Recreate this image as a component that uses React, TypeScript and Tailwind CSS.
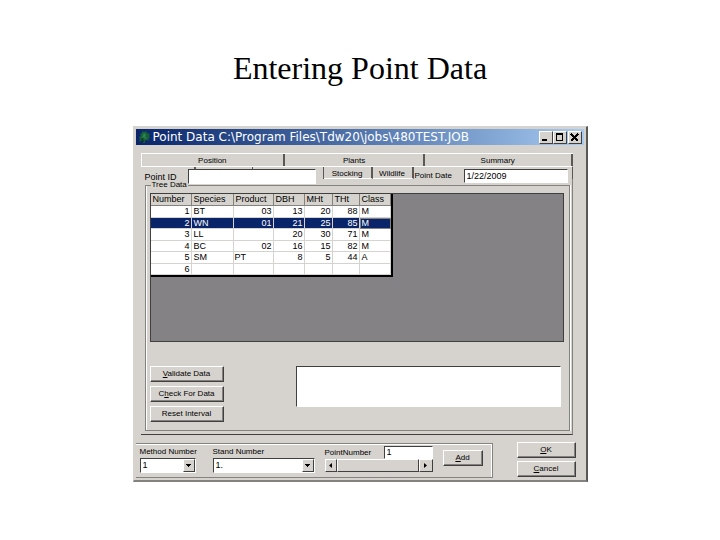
import { useState } from "react";
import type { ReactNode } from "react";

interface TreeRow {
  number: number;
  species: string;
  product: string;
  dbh: string;
  mht: string;
  tht: string;
  cls: string;
}

const TREES: TreeRow[] = [
  { number: 1, species: "BT", product: "03", dbh: "13", mht: "20", tht: "88", cls: "M" },
  { number: 2, species: "WN", product: "01", dbh: "21", mht: "25", tht: "85", cls: "M" },
  { number: 3, species: "LL", product: "", dbh: "20", mht: "30", tht: "71", cls: "M" },
  { number: 4, species: "BC", product: "02", dbh: "16", mht: "15", tht: "82", cls: "M" },
  { number: 5, species: "SM", product: "PT", dbh: "8", mht: "5", tht: "44", cls: "A" },
  { number: 6, species: "", product: "", dbh: "", mht: "", tht: "", cls: "" },
];

const HEADERS = ["Number", "Species", "Product", "DBH", "MHt", "THt", "Class"];

const RAISED =
  "border border-t-white border-l-white border-b-[#404040] border-r-[#404040] bg-[#d6d3ce]";
const SUNKEN =
  "border border-t-[#404040] border-l-[#404040] border-b-white border-r-white bg-white";

function PushButton({ children, className }: { children: ReactNode; className: string }) {
  return (
    <button
      type="button"
      className={`${RAISED} flex items-center justify-center whitespace-nowrap shadow-[inset_-1px_-1px_0_#84827f] ${className}`}
    >
      <span>{children}</span>
    </button>
  );
}

function Combo({ id, label, value, className }: { id: string; label: string; value: string; className: string }) {
  return (
    <div className={className}>
      <label htmlFor={id} className="block h-3 whitespace-nowrap">
        {label}
      </label>
      <div className={`${SUNKEN} relative h-[15px]`}>
        <select
          id={id}
          defaultValue={value}
          className="block h-[13px] w-full appearance-none bg-white pl-0.5 text-[9px] leading-[13px] outline-none"
        >
          <option>{value}</option>
        </select>
        <span
          className={`${RAISED} pointer-events-none absolute top-0 right-0 flex h-[13px] w-3 items-center justify-center`}
        >
          <svg width="5" height="3" viewBox="0 0 5 3" shapeRendering="crispEdges">
            <path d="M0 0h5v1H4v1H3v1H2V2H1V1H0z" />
          </svg>
        </span>
      </div>
    </div>
  );
}

function WindowButton({ label, children }: { label: string; children: ReactNode }) {
  return (
    <button
      type="button"
      aria-label={label}
      className={`${RAISED} flex h-[13px] w-[14px] items-center justify-center`}
    >
      <svg width="9" height="9" viewBox="0 0 9 9" shapeRendering="crispEdges">
        {children}
      </svg>
    </button>
  );
}

function TitleBar() {
  return (
    <div className="flex h-4 items-center bg-linear-to-r from-[#0a246a] to-[#a6caf0] pr-0.5">
      <svg className="ml-0.5 shrink-0" width="13" height="14" viewBox="0 0 13 14">
        <path
          d="M4 1l2 1 2-1 1 2 3 1-1 2 1 2-2 1 1 2-3-1-1 1v2H5v-3L3 11l-2 1 1-3-1-2 2-1-1-2 2-1z"
          fill="#17603a"
        />
        <path d="M6 3l2 2-1 2 2 1-2 1-1-2-2 1 1-3z" fill="#2c8550" />
        <path d="M3 9l2-1 1 4H4z" fill="#0c3a2c" />
      </svg>
      <h2 className="ml-0.5 flex-1 whitespace-nowrap font-['DejaVu_Sans',sans-serif] text-[12px] leading-4 text-white">
        Point Data C:\Program Files\Tdw20\jobs\480TEST.JOB
      </h2>
      <div className="flex">
        <WindowButton label="Minimize">
          <path d="M1 6h5v2H1z" />
        </WindowButton>
        <WindowButton label="Maximize">
          <path d="M1 0h7v8H1zM2 2v5h5V2z" fillRule="evenodd" />
        </WindowButton>
        <span className="w-px" />
        <WindowButton label="Close">
          <path d="M1 1l7 7M8 1L1 8" stroke="#000" strokeWidth="2" />
        </WindowButton>
      </div>
    </div>
  );
}

const TAB = "border-r-2 border-[#5a5855] text-center whitespace-nowrap";

function Tabs() {
  return (
    <div className="ml-[5px] mr-[11px] mt-2">
      <div className="flex h-[13px] border-t border-l border-white leading-[14px]">
        <button type="button" className={`${TAB} flex-[36]`}>Position</button>
        <button type="button" className={`${TAB} flex-[35]`}>Plants</button>
        <button type="button" className={`${TAB} flex-[37]`}>Summary</button>
      </div>
      <div className="relative flex h-[13px] border-t border-r border-t-white border-r-[#5a5855] leading-[14px]">
        <button type="button" aria-label="Trees" className={`${TAB} h-1 w-[55px] shrink-0`} />
        <span className="w-[57px] shrink-0 border-r border-[#5a5855]" />
        <span className="w-[71px] shrink-0 border-r border-[#5a5855]" />
        <button type="button" className={`${TAB} w-[49px] shrink-0 border-b border-b-white`}>Stocking</button>
        <button type="button" className={`${TAB} w-[41px] shrink-0 border-b border-b-white`}>Wildlife</button>
        {/* header fields sit on top of the second tab row */}
        <div className="absolute top-[2px] left-0 flex h-[15px] items-center">
          <label htmlFor="point-id" className="w-[47px] pl-1 text-[9px] leading-[10px]">
            Point ID
          </label>
          <input id="point-id" className={`${SUNKEN} h-[15px] w-[128px] px-0.5 outline-none`} />
        </div>
        <div className="flex min-w-0 flex-1 items-start pt-0.5">
          <label htmlFor="point-date" className="w-[50px] shrink-0 pl-px whitespace-nowrap">
            Point Date
          </label>
          <input
            id="point-date"
            defaultValue="1/22/2009"
            className={`${SUNKEN} mr-1 h-[14px] min-w-0 flex-1 px-0.5 text-[9px] outline-none`}
          />
        </div>
      </div>
    </div>
  );
}

function TreeTable() {
  const [selected, setSelected] = useState(2);

  return (
    <div className="mt-0.5 h-[149px] border border-[#404040] bg-[#848284] text-[9px]">
      <table className="w-[242px] table-fixed border-separate border-spacing-0 border-r-2 border-b-2 border-black bg-white">
        <colgroup>
          <col className="w-[41px]" />
          <col className="w-[42px]" />
          <col className="w-[40px]" />
          <col className="w-[31px]" />
          <col className="w-[28px]" />
          <col className="w-[27px]" />
          <col />
        </colgroup>
        <thead>
          <tr className="h-3 bg-[#d6d3ce] text-left leading-[11px]">
            {HEADERS.map((h) => (
              <th
                key={h}
                className="border-r border-b border-r-[#84827f] border-b-[#84827f] p-0 pl-0.5 font-normal"
              >
                {h}
              </th>
            ))}
          </tr>
        </thead>
        <tbody>
          {TREES.map((row) => {
            const active = row.number === selected;
            const cell = `border-r border-b border-[#d6d3ce] p-0 h-[11px] ${active ? "bg-[#0a246a] text-white" : ""}`;
            return (
              <tr
                key={row.number}
                onClick={() => setSelected(row.number)}
                className="leading-[10px] odd:leading-[11px]"
              >
                <td className={`${cell} pr-px text-right`}>{row.number}</td>
                <td className={`${cell} pl-0.5`}>{row.species}</td>
                <td className={`${cell} px-px ${row.product === "PT" ? "" : "text-right"}`}>
                  {row.product}
                </td>
                <td className={`${cell} pr-px text-right`}>{row.dbh}</td>
                <td className={`${cell} pr-px text-right`}>{row.mht}</td>
                <td className={`${cell} pr-px text-right`}>{row.tht}</td>
                <td className={`${cell} pl-0.5 ${active ? "outline outline-1 -outline-offset-1 outline-[#84827f]" : ""}`}>
                  {row.cls}
                </td>
              </tr>
            );
          })}
        </tbody>
      </table>
    </div>
  );
}

function BottomPanel() {
  return (
    <div className="mt-[7px] flex">
      <div className="mt-px flex h-[35px] flex-1 border-t border-r border-b border-[#84827f] shadow-[inset_-1px_1px_0_#fff] pl-1">
        <Combo id="method" label="Method Number" value="1" className="mt-0.5 w-14" />
        <Combo id="stand" label="Stand Number" value="1." className="mt-0.5 ml-[17px] w-[102px]" />
        <div className="ml-[10px] w-[108px]">
          <div className="mt-px flex items-center justify-between">
            <label htmlFor="point-number" className="pt-0.5">
              PointNumber
            </label>
            <input
              id="point-number"
              defaultValue="1"
              className={`${SUNKEN} h-[13px] w-[49px] px-0.5 text-[9px] outline-none`}
            />
          </div>
          <div className="flex h-[13px]">
            <button type="button" aria-label="Previous point" className={`${RAISED} flex w-3 items-center justify-center`}>
              <svg width="3" height="5" viewBox="0 0 3 5">
                <path d="M3 0v5L0 2.5z" />
              </svg>
            </button>
            <div className={`${RAISED} flex-1`} />
            <button type="button" aria-label="Next point" className={`${RAISED} flex w-3.5 items-center justify-center`}>
              <svg width="3" height="5" viewBox="0 0 3 5">
                <path d="M0 0v5l3-2.5z" />
              </svg>
            </button>
          </div>
        </div>
        <PushButton className="mt-1.5 ml-[10px] h-4 w-10">
          <u>A</u>dd
        </PushButton>
      </div>
      <div className="mr-2 ml-6 flex w-[59px] flex-col gap-[3px]">
        <PushButton className="h-4">
          <u>O</u>K
        </PushButton>
        <PushButton className="h-4">
          <u>C</u>ancel
        </PushButton>
      </div>
    </div>
  );
}

export default function App() {
  return (
    <main className="min-h-screen bg-white pt-[50px] pb-14 text-black">
      <h1 className="text-center font-['Liberation_Serif',serif] text-[32px] leading-9">
        Entering Point Data
      </h1>

      <section className="mx-auto mt-10 w-full max-w-[455px] border-t border-l border-r-2 border-b-2 border-t-[#d6d3ce] border-l-[#d6d3ce] border-r-[#5a5855] border-b-[#84827f] bg-[#d6d3ce] px-0.5 pt-0.5 pb-0.5 font-['Liberation_Sans',Arial,sans-serif] text-[8px] leading-3">
        <TitleBar />
        <Tabs />

        <div className="mr-[11px] ml-[5px] border-r border-b border-r-[#84827f] border-b-[#404040] pb-[3px] pl-1 pr-0.5">
          <fieldset className="min-w-0 border border-[#84827f] px-1 pr-[5px] shadow-[inset_1px_0_0_#fff,1px_0_0_#fff]">
            <legend className="ml-px h-3 px-px leading-3">Tree Data</legend>
            <TreeTable />
            <div className="mt-6 mb-2 flex justify-between pr-[3px]">
              <div className="flex flex-col gap-1">
                <PushButton className="h-4 w-[74px]">
                  <u>V</u>alidate Data
                </PushButton>
                <PushButton className="h-4 w-[74px]">
                  C<u>h</u>eck For Data
                </PushButton>
                <PushButton className="h-4 w-[74px]">Reset Interval</PushButton>
              </div>
              <textarea
                aria-label="Messages"
                className={`${SUNKEN} ml-[72px] h-[41px] flex-1 resize-none outline-none`}
              />
            </div>
          </fieldset>
        </div>

        <BottomPanel />
      </section>
    </main>
  );
}
